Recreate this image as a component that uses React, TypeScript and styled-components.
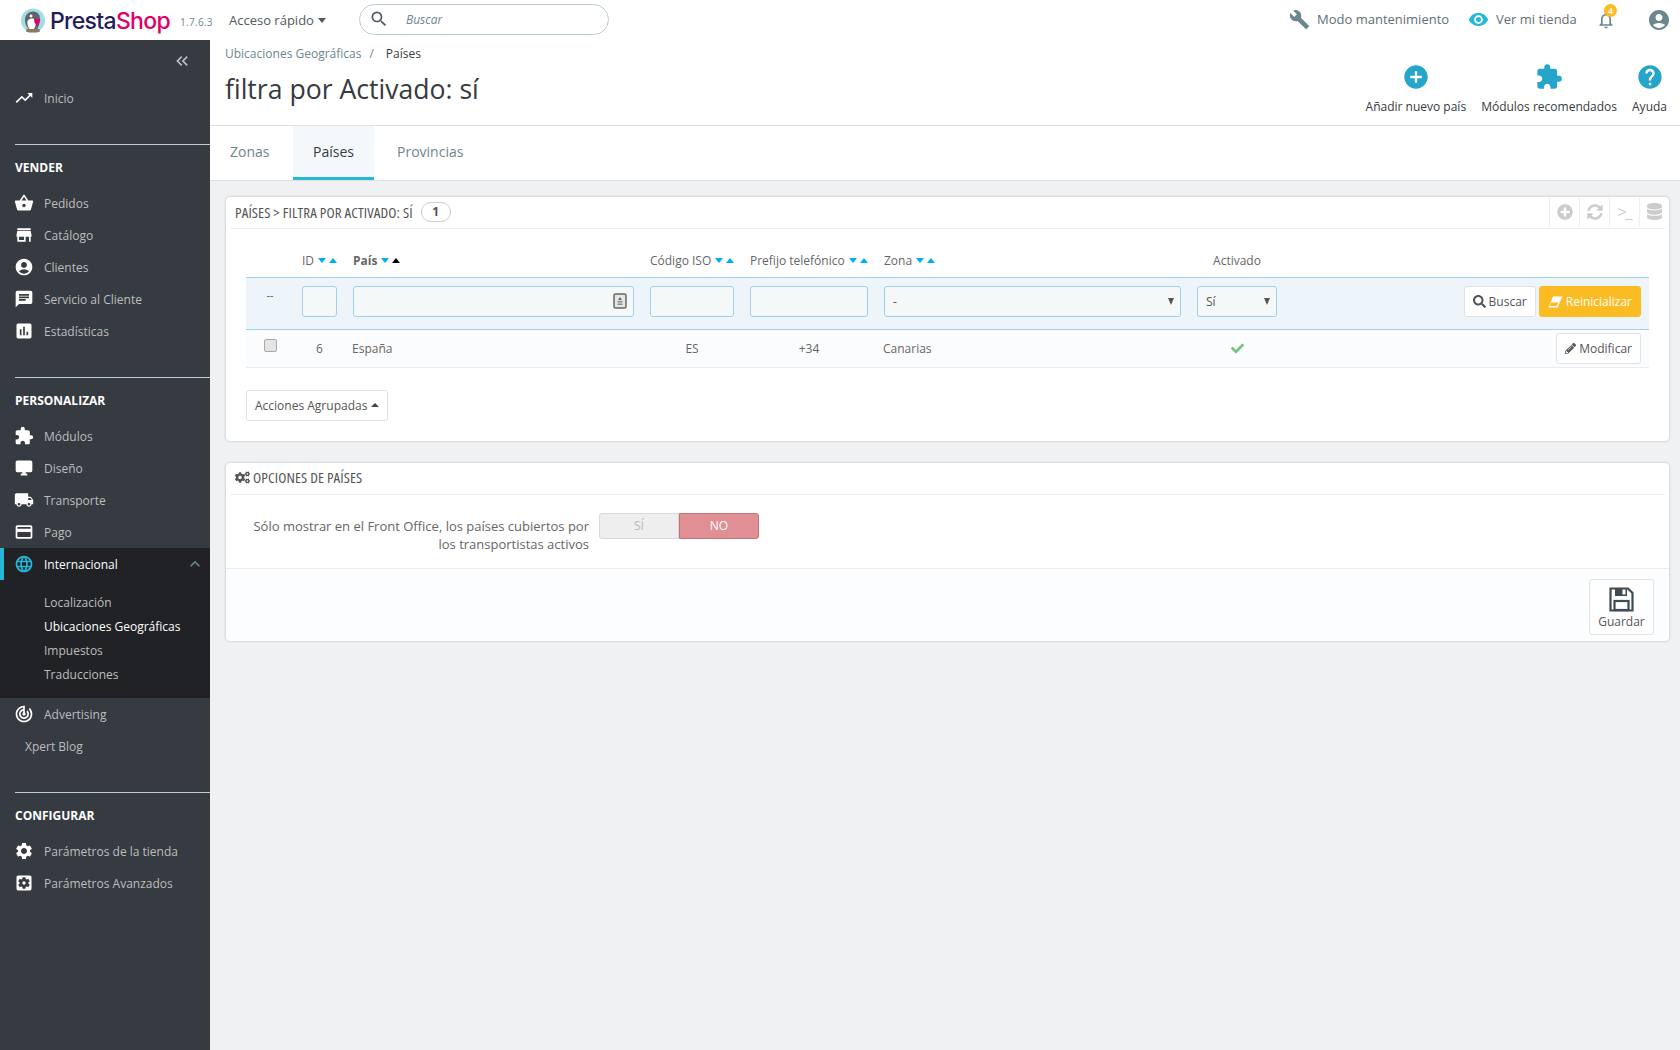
import React from "react";
import styled, { createGlobalStyle } from "styled-components";
import {
  MdTrendingUp, MdShoppingBasket, MdStore, MdAccountCircle, MdChat, MdAssessment, MdExtension,
  MdDesktopWindows, MdLocalShipping, MdCreditCard, MdLanguage, MdSettings, MdSettingsApplications,
  MdTrackChanges, MdBuild, MdVisibility, MdNotificationsNone, MdAddCircle, MdHelp, MdSearch, MdExpandLess,
  MdKeyboardDoubleArrowLeft,
} from "react-icons/md";
import { FaSearch, FaPencilAlt, FaCheck, FaCogs, FaPlusCircle, FaSyncAlt, FaDatabase } from "react-icons/fa";

const Global = createGlobalStyle`
  html, body { margin: 0; padding: 0; background: #eff1f2; }
  body { font-family: "Open Sans", "Liberation Sans", sans-serif; font-size: 12px; color: #363a41; }
  * { box-sizing: border-box; }
`;

const Page = styled.div`width: 1680px; height: 1050px; display: flex; flex-direction: column; overflow: hidden;`;
const TopBar = styled.header`height: 40px; background: #fff; display: flex; align-items: center; flex: none;`;
const Logo = styled.div`display: flex; align-items: center; margin-left: 21px; width: 159px;`;
const LogoWord = styled.span`font-family: "Inter", sans-serif; font-weight: 500; font-size: 23px; letter-spacing: -0.7px; margin-left: 5px; color: #251b5b; line-height: 24px; position: relative; top: 1px;`;
const LogoPink = styled.span`color: #df0067;`;
const Version = styled.span`font-size: 10px; color: #6c868e; width: 49px; letter-spacing: .3px; padding-top: 3px;`;
const QuickAccess = styled.div`display: flex; align-items: center; gap: 4px; font-size: 13px; color: #505a60; width: 130px;`;
const CaretDown = styled.i`display: inline-block; width: 0; height: 0; border-left: 4.5px solid transparent; border-right: 4.5px solid transparent; border-top: 5px solid #505a60;`;
const SearchBox = styled.div`width: 250px; height: 31px; margin-bottom: 2px; border: 1px solid #bbcdd2; border-radius: 16px; display: flex; align-items: center; padding-left: 9px; color: #505a60;`;
const SearchHint = styled.span`font-style: italic; color: #6c868e; font-size: 12px; margin-left: 17px;`;
const TopRight = styled.div`margin-left: auto; display: flex; align-items: center; height: 40px;`;
const TopLink = styled.div<{ $w: number; $c: string }>`display: flex; align-items: center; gap: 7px; font-size: 13px; color: #5f6e75; width: ${(p) => p.$w}px; margin-bottom: 2px; svg { color: ${(p) => p.$c}; flex: none; }`;
const Bell = styled.div`position: relative; width: 51px; display: flex; color: #6c868e;`;
const Badge = styled.span`position: absolute; left: 8px; top: -6px; width: 13px; height: 13px; border-radius: 50%; background: #fbbb22; color: #fff; font-size: 9px; font-weight: 600; line-height: 13px; text-align: center;`;
const Avatar = styled.div`display: flex; color: #6c868e; margin-right: 9px;`;

const Body = styled.div`flex: 1; display: flex; min-height: 0;`;
const Side = styled.nav`width: 210px; flex: none; background: #363a41; color: #bebebe;`;
const Collapse = styled.div`height: 42px; display: flex; align-items: center; justify-content: flex-end; padding-right: 18px; color: #bebebe;`;
const Group = styled.div<{ $top: number }>`margin: ${(p) => p.$top}px 0 0 15px; border-top: 1px solid #bbcdd2;`;
const GroupTitle = styled.div`height: 42px; padding-top: 2px; display: flex; align-items: center; color: #fff; font-weight: 700; font-size: 12px; text-transform: uppercase;`;
const Item = styled.div<{ $active?: boolean; $plain?: boolean }>`
  height: 32px; display: flex; align-items: center; font-size: 12px; position: relative;
  padding-left: ${(p) => (p.$plain ? 25 : 15)}px;
  color: ${(p) => (p.$active ? "#fff" : "#bebebe")};
  background: ${(p) => (p.$active ? "#202226" : "transparent")};
  ${(p) => (p.$active ? "box-shadow: inset 4px 0 0 #25b9d7;" : "")}
  svg.lead { width: 20px; height: 20px; color: ${(p) => (p.$active ? "#25b9d7" : "#fff")}; margin: 0 10px 0 -1px; flex: none; }
`;
const ItemArrow = styled.span`margin-left: auto; margin-right: 5px; display: flex; color: #6c868e;`;
const Sub = styled.div`background: #202226; padding: 10px 0 12px 44px;`;
const SubItem = styled.div<{ $on?: boolean }>`height: 24px; display: flex; align-items: center; color: ${(p) => (p.$on ? "#fff" : "#bebebe")}; font-size: 12px;`;
const GroupItems = styled.div``;

const Main = styled.main`flex: 1; min-width: 0; display: flex; flex-direction: column;`;
const Head = styled.div`height: 86px; background: #fff; border-bottom: 1px solid #dfdfdf; display: flex; justify-content: space-between; padding: 0 13px 0 15px; flex: none;`;
const Crumbs = styled.div`display: flex; gap: 8px; font-size: 12px; color: #6c868e; height: 26px; align-items: center;`;
const CrumbNow = styled.span`color: #363a41; margin-left: 4px;`;
const Title = styled.h1`margin: 0; font-weight: 400; font-size: 26.6px; line-height: 38px; margin-top: 4px; color: #363a41;`;
const Actions = styled.div`display: flex; gap: 15px; align-items: flex-start; padding-top: 23px;`;
const Action = styled.div`display: flex; flex-direction: column; align-items: center; font-size: 12px; color: #363a41; line-height: 16px; gap: 8px; svg { color: #25a5c9; }`;
const Tabs = styled.div`height: 55px; background: #fff; border-bottom: 1px solid #dfdfdf; display: flex; flex: none;`;
const Tab = styled.div<{ $on?: boolean; $w: number; $pad: number }>`
  height: 54px; width: ${(p) => p.$w}px; display: flex; align-items: center; font-size: 14px; padding: 0 0 1px ${(p) => p.$pad}px; color: ${(p) => (p.$on ? "#363a41" : "#6c868e")};
  background: ${(p) => (p.$on ? "#f4f8fb" : "#fff")};
  border-bottom: 3px solid ${(p) => (p.$on ? "#25b9d7" : "transparent")};
`;
const Content = styled.div`padding: 15px 10px 0 15px; display: flex; flex-direction: column; gap: 20px;`;
const Panel = styled.section`background: #fff; border: 1px solid #d8dee1; border-radius: 5px; box-shadow: 0 0 3px rgba(0,0,0,.08);`;
const PanelHead = styled.div`height: 32px; margin: 0 4px; border-bottom: 1px solid #eee; display: flex; align-items: center; padding: 0 0 2px 5px; color: #555; font-size: 15px; letter-spacing: .1px; text-transform: uppercase; white-space: nowrap; font-stretch: 75%;`;
const Count = styled.span`margin-left: 8px; width: 30px; height: 20px; border: 1px solid #ccc; border-radius: 10px; font-size: 12px; font-weight: 700; font-stretch: 100%; display: flex; align-items: center; justify-content: center; color: #555;`;
const Tools = styled.div`margin-left: auto; margin-right: -4px; display: flex; height: 30px;`;
const Tool = styled.div`width: 30px; height: 30px; border-left: 1px solid #eee; display: flex; align-items: center; justify-content: center; color: #ccc; font-size: 16px; font-stretch: 100%; letter-spacing: -1px;`;
const HeadIcon = styled.span`display: flex; margin-right: 3px; color: #555;`;
const ListWrap = styled.div`padding: 0 20px 20px 20px;`;
const Table = styled.table`width: 100%; border-collapse: collapse; table-layout: fixed; font-size: 12px; color: #666;`;
const Th = styled.th<{ $bold?: boolean; $center?: boolean }>`height: 48px; padding: 16px 8px 0; font-weight: ${(p) => (p.$bold ? 700 : 400)}; text-align: ${(p) => (p.$center ? "center" : "left")}; white-space: nowrap; color: #666;`;
const ThInner = styled.span`display: inline-flex; align-items: center; gap: 3px;`;
const Up = styled.i<{ $dark?: boolean }>`display: inline-block; width: 0; height: 0; border-left: 4px solid transparent; border-right: 4px solid transparent; border-bottom: 5px solid ${(p) => (p.$dark ? "#000" : "#00aff0")};`;
const Down = styled.i`display: inline-block; width: 0; height: 0; margin-left: 1px; border-left: 4px solid transparent; border-right: 4px solid transparent; border-top: 5px solid #00aff0;`;
const FilterRow = styled.tr`background: #edf5fb; border-top: 1px solid #a0d0eb; border-bottom: 1px solid #a0d0eb;`;
const Fd = styled.td`height: 52px; padding: 0 8px 3px; vertical-align: middle;`;
const Dash = styled.div`text-align: center; font-size: 11px; color: #555; margin-top: -14px;`;
const FieldBox = styled.div`height: 31px; background: #f5f8f9; border: 1px solid #a0d0eb; border-radius: 3px; display: flex; align-items: center; padding: 0 8px; color: #555; position: relative; font-size: 12px;`;
const KeyIcon = styled.svg`position: absolute; right: 5px; top: 6px;`;
const SelectArrow = styled.i`position: absolute; right: 6px; top: 11px; width: 0; height: 0; border-left: 3px solid transparent; border-right: 3px solid transparent; border-top: 7px solid #555;`;
const Btns = styled.div`display: flex; justify-content: flex-end; gap: 3px;`;
const Btn = styled.div<{ $warn?: boolean }>`height: 31px; padding: 0 8px; border: 1px solid ${(p) => (p.$warn ? "#fbbb22" : "#dfe3e5")}; border-radius: 3px; background: ${(p) => (p.$warn ? "#fbbb22" : "#fff")}; color: ${(p) => (p.$warn ? "#fff" : "#555")}; display: inline-flex; align-items: center; gap: 3px; font-size: 12px; white-space: nowrap;`;
const DataRow = styled.tr`background: #fbfcfd; border-bottom: 1px solid #eaedef;`;
const Td = styled.td<{ $center?: boolean; $tight?: boolean }>`height: 38px; padding: 0 8px 0 ${(p) => (p.$tight ? 7 : 8)}px; text-align: ${(p) => (p.$center ? "center" : "left")}; color: #666; vertical-align: middle;`;
const CheckMark = styled(FaCheck)`display: inline-block; vertical-align: middle; margin-top: -2px;`;
const Check = styled.input`appearance: none; width: 13px; height: 13px; margin: 0 0 5px 10px; display: block; background: #e4e4e4; border: 1px solid #a8a8a8; border-radius: 2px;`;
const Bulk = styled.div`margin-top: 22px; width: 142px; height: 31px; border: 1px solid #dfe3e5; border-radius: 3px; display: flex; align-items: center; padding-left: 8px; gap: 4px; color: #555; font-size: 12px;`;
const BulkUp = styled.i`display: inline-block; width: 0; height: 0; border-left: 4px solid transparent; border-right: 4px solid transparent; border-bottom: 4px solid #444;`;
const FormRow = styled.div`display: flex; padding: 18px 0 0; gap: 9px; height: 73px;`;
const FormLabel = styled.div`width: 363px; text-align: right; font-size: 13px; line-height: 18px; color: #666; padding: 4px 0 0 20px;`;
const Switch = styled.div`display: flex; width: 160px; height: 26px; margin-left: 1px;`;
const SwOff = styled.div`width: 80px; background: #eee; border: 1px solid #d8d8d8; border-radius: 3px 0 0 3px; color: #bbb; display: flex; align-items: center; justify-content: center; font-size: 12px;`;
const SwOn = styled.div`width: 80px; background: #e08f95; border: 1px solid #c87278; border-radius: 0 3px 3px 0; color: #fff; display: flex; align-items: center; justify-content: center; font-size: 12px; font-weight: 500;`;
const PanelFoot = styled.div`border-top: 1px solid #eaedef; background: #fcfdfe; height: 73px; display: flex; justify-content: flex-end; padding: 10px 15px 0 0; border-radius: 0 0 5px 5px;`;
const Save = styled.div`width: 65px; height: 56px; border: 1px solid #dfe3e5; border-radius: 3px; background: #fff; display: flex; flex-direction: column; align-items: center; justify-content: flex-end; padding-bottom: 5px; font-size: 12px; color: #555; line-height: 15px; gap: 2px;`;

const Sort = ({ dark }: { dark?: boolean }) => (
  <ThInner>
    <Down />
    <Up $dark={dark} />
  </ThInner>
);

const LogoMark = () => (
  <svg width="24" height="25" viewBox="0 0 24 25">
    <circle cx="12" cy="12.5" r="12" fill="#a4dbe8" />
    <path d="M4 12c0-5 3.500-8.500 8-8.500S19.500 7 19 12c-.4 4-1.500 7-3 9.500H8C5.500 19 4 16 4 12z" fill="#5f646b" />
    <path d="M6.500 13c1-2.500 6-3.500 7.500-1 1.500 3 .5 7-1.500 9.500H9c-2-2-3-5.500-2.500-8.500z" fill="#fff" />
    <circle cx="10" cy="8" r="1.500" fill="#fff" />
    <path d="M13 10.500l6.500 1-3 7-3-4z" fill="#df0067" />
    <path d="M5.500 21h13l.5 2.500-3 1H8l-3-1z" fill="#8d7a5e" />
  </svg>
);

const SaveIcon = () => (
  <svg width="25" height="25" viewBox="0 0 25 25" fill="none">
    <path d="M2 1.500h17l4.500 4.500v17.500H1.500V1.500z" stroke="#3f4a52" strokeWidth="2.200" />
    <path d="M6 1.500h12v7.500H6z" fill="#3f4a52" />
    <rect x="13.500" y="2.500" width="3" height="5" fill="#fff" />
    <rect x="5.500" y="14" width="14" height="9" stroke="#3f4a52" strokeWidth="2.200" />
  </svg>
);

const EraserIcon = () => (
  <svg width="15" height="12" viewBox="0 0 15 12">
    <path d="M5 .500h9.500L9.500 11.500H.500z" fill="#fff" />
    <path d="M2.800 6.500h7.800L8.700 10H1.800z" fill="#fbbb22" />
  </svg>
);

const Side_Item = ({ icon: I, label }: { icon: React.ComponentType<{ className?: string }>; label: string }) => (
  <Item><I className="lead" />{label}</Item>
);

export default function App() {
  return (
    <Page>
      <Global />
      <TopBar>
        <Logo>
          <LogoMark />
          <LogoWord>Presta<LogoPink>Shop</LogoPink></LogoWord>
        </Logo>
        <Version>1.7.6.3</Version>
        <QuickAccess>Acceso rápido <CaretDown /></QuickAccess>
        <SearchBox><MdSearch size={20} /><SearchHint>Buscar</SearchHint></SearchBox>
        <TopRight>
          <TopLink $w={179} $c="#6c868e"><MdBuild size={21} />Modo mantenimiento</TopLink>
          <TopLink $w={128} $c="#25b9d7"><MdVisibility size={21} />Ver mi tienda</TopLink>
          <Bell><MdNotificationsNone size={20} /><Badge>4</Badge></Bell>
          <Avatar><MdAccountCircle size={24} /></Avatar>
        </TopRight>
      </TopBar>
      <Body>
        <Side>
          <Collapse><MdKeyboardDoubleArrowLeft size={20} /></Collapse>
          <Side_Item icon={MdTrendingUp} label="Inicio" />
          <Group $top={30}>
            <GroupTitle>Vender</GroupTitle>
          </Group>
          <GroupItems>
            <Side_Item icon={MdShoppingBasket} label="Pedidos" />
            <Side_Item icon={MdStore} label="Catálogo" />
            <Side_Item icon={MdAccountCircle} label="Clientes" />
            <Side_Item icon={MdChat} label="Servicio al Cliente" />
            <Side_Item icon={MdAssessment} label="Estadísticas" />
          </GroupItems>
          <Group $top={30}>
            <GroupTitle>Personalizar</GroupTitle>
          </Group>
          <GroupItems>
            <Side_Item icon={MdExtension} label="Módulos" />
            <Side_Item icon={MdDesktopWindows} label="Diseño" />
            <Side_Item icon={MdLocalShipping} label="Transporte" />
            <Side_Item icon={MdCreditCard} label="Pago" />
            <Item $active>
              <MdLanguage className="lead" />Internacional
              <ItemArrow><MdExpandLess size={20} /></ItemArrow>
            </Item>
            <Sub>
              <SubItem>Localización</SubItem>
              <SubItem $on>Ubicaciones Geográficas</SubItem>
              <SubItem>Impuestos</SubItem>
              <SubItem>Traducciones</SubItem>
            </Sub>
            <Side_Item icon={MdTrackChanges} label="Advertising" />
            <Item $plain>Xpert Blog</Item>
          </GroupItems>
          <Group $top={30}>
            <GroupTitle>Configurar</GroupTitle>
          </Group>
          <GroupItems>
            <Side_Item icon={MdSettings} label="Parámetros de la tienda" />
            <Side_Item icon={MdSettingsApplications} label="Parámetros Avanzados" />
          </GroupItems>
        </Side>
        <Main>
          <Head>
            <div>
              <Crumbs><span>Ubicaciones Geográficas</span><span>/</span><CrumbNow>Países</CrumbNow></Crumbs>
              <Title>filtra por Activado: sí</Title>
            </div>
            <Actions>
              <Action><MdAddCircle size={28} />Añadir nuevo país</Action>
              <Action><MdExtension size={28} />Módulos recomendados</Action>
              <Action><MdHelp size={28} />Ayuda</Action>
            </Actions>
          </Head>
          <Tabs>
            <Tab $w={83} $pad={20}>Zonas</Tab>
            <Tab $w={81} $pad={20} $on>Países</Tab>
            <Tab $w={120} $pad={23}>Provincias</Tab>
          </Tabs>
          <Content>
            <Panel>
              <PanelHead>
                Países &gt; filtra por Activado: sí
                <Count>1</Count>
                <Tools>
                  <Tool><FaPlusCircle size={16} /></Tool>
                  <Tool><FaSyncAlt size={16} /></Tool>
                  <Tool>&gt;_</Tool>
                  <Tool><FaDatabase size={17} /></Tool>
                </Tools>
              </PanelHead>
              <ListWrap>
                <Table>
                  <colgroup>
                    <col width="48" /><col width="51" /><col width="297" /><col width="100" /><col width="134" /><col width="313" /><col width="96" /><col />
                  </colgroup>
                  <thead>
                    <tr>
                      <Th />
                      <Th><ThInner>ID <Sort /></ThInner></Th>
                      <Th $bold><ThInner>País <Sort dark /></ThInner></Th>
                      <Th><ThInner>Código ISO <Sort /></ThInner></Th>
                      <Th><ThInner>Prefijo telefónico <Sort /></ThInner></Th>
                      <Th><ThInner>Zona <Sort /></ThInner></Th>
                      <Th $center>Activado</Th>
                      <Th />
                    </tr>
                  </thead>
                  <tbody>
                    <FilterRow>
                      <Fd><Dash>--</Dash></Fd>
                      <Fd><FieldBox /></Fd>
                      <Fd>
                        <FieldBox>
                          <KeyIcon width="16" height="16" viewBox="0 0 16 16">
                            <rect x="2" y="1" width="12" height="14" rx="1.500" fill="#e6e6e6" stroke="#666" strokeWidth="1.500" />
                            <path d="M8 4l2 3H6z" fill="#666" />
                            <rect x="5.500" y="8" width="5" height="1.500" fill="#888" />
                            <rect x="5.500" y="10.500" width="5" height="1.500" fill="#888" />
                          </KeyIcon>
                        </FieldBox>
                      </Fd>
                      <Fd><FieldBox /></Fd>
                      <Fd><FieldBox /></Fd>
                      <Fd><FieldBox>-<SelectArrow /></FieldBox></Fd>
                      <Fd><FieldBox>Sí<SelectArrow /></FieldBox></Fd>
                      <Fd>
                        <Btns>
                          <Btn><FaSearch size={13} />Buscar</Btn>
                          <Btn $warn><EraserIcon />Reinicializar</Btn>
                        </Btns>
                      </Fd>
                    </FilterRow>
                    <DataRow>
                      <Td><Check type="checkbox" /></Td>
                      <Td $center>6</Td>
                      <Td $tight>España</Td>
                      <Td $center>ES</Td>
                      <Td $center>+34</Td>
                      <Td $tight>Canarias</Td>
                      <Td $center><CheckMark size={13} color="#72c279" /></Td>
                      <Td>
                        <Btns>
                          <Btn><FaPencilAlt size={11} />Modificar</Btn>
                        </Btns>
                      </Td>
                    </DataRow>
                  </tbody>
                </Table>
                <Bulk>Acciones Agrupadas <BulkUp /></Bulk>
              </ListWrap>
            </Panel>
            <Panel>
              <PanelHead><HeadIcon><FaCogs size={15} /></HeadIcon>Opciones de países</PanelHead>
              <FormRow>
                <FormLabel>Sólo mostrar en el Front Office, los países cubiertos por los transportistas activos</FormLabel>
                <Switch><SwOff>SÍ</SwOff><SwOn>NO</SwOn></Switch>
              </FormRow>
              <PanelFoot><Save><SaveIcon />Guardar</Save></PanelFoot>
            </Panel>
          </Content>
        </Main>
      </Body>
    </Page>
  );
}
